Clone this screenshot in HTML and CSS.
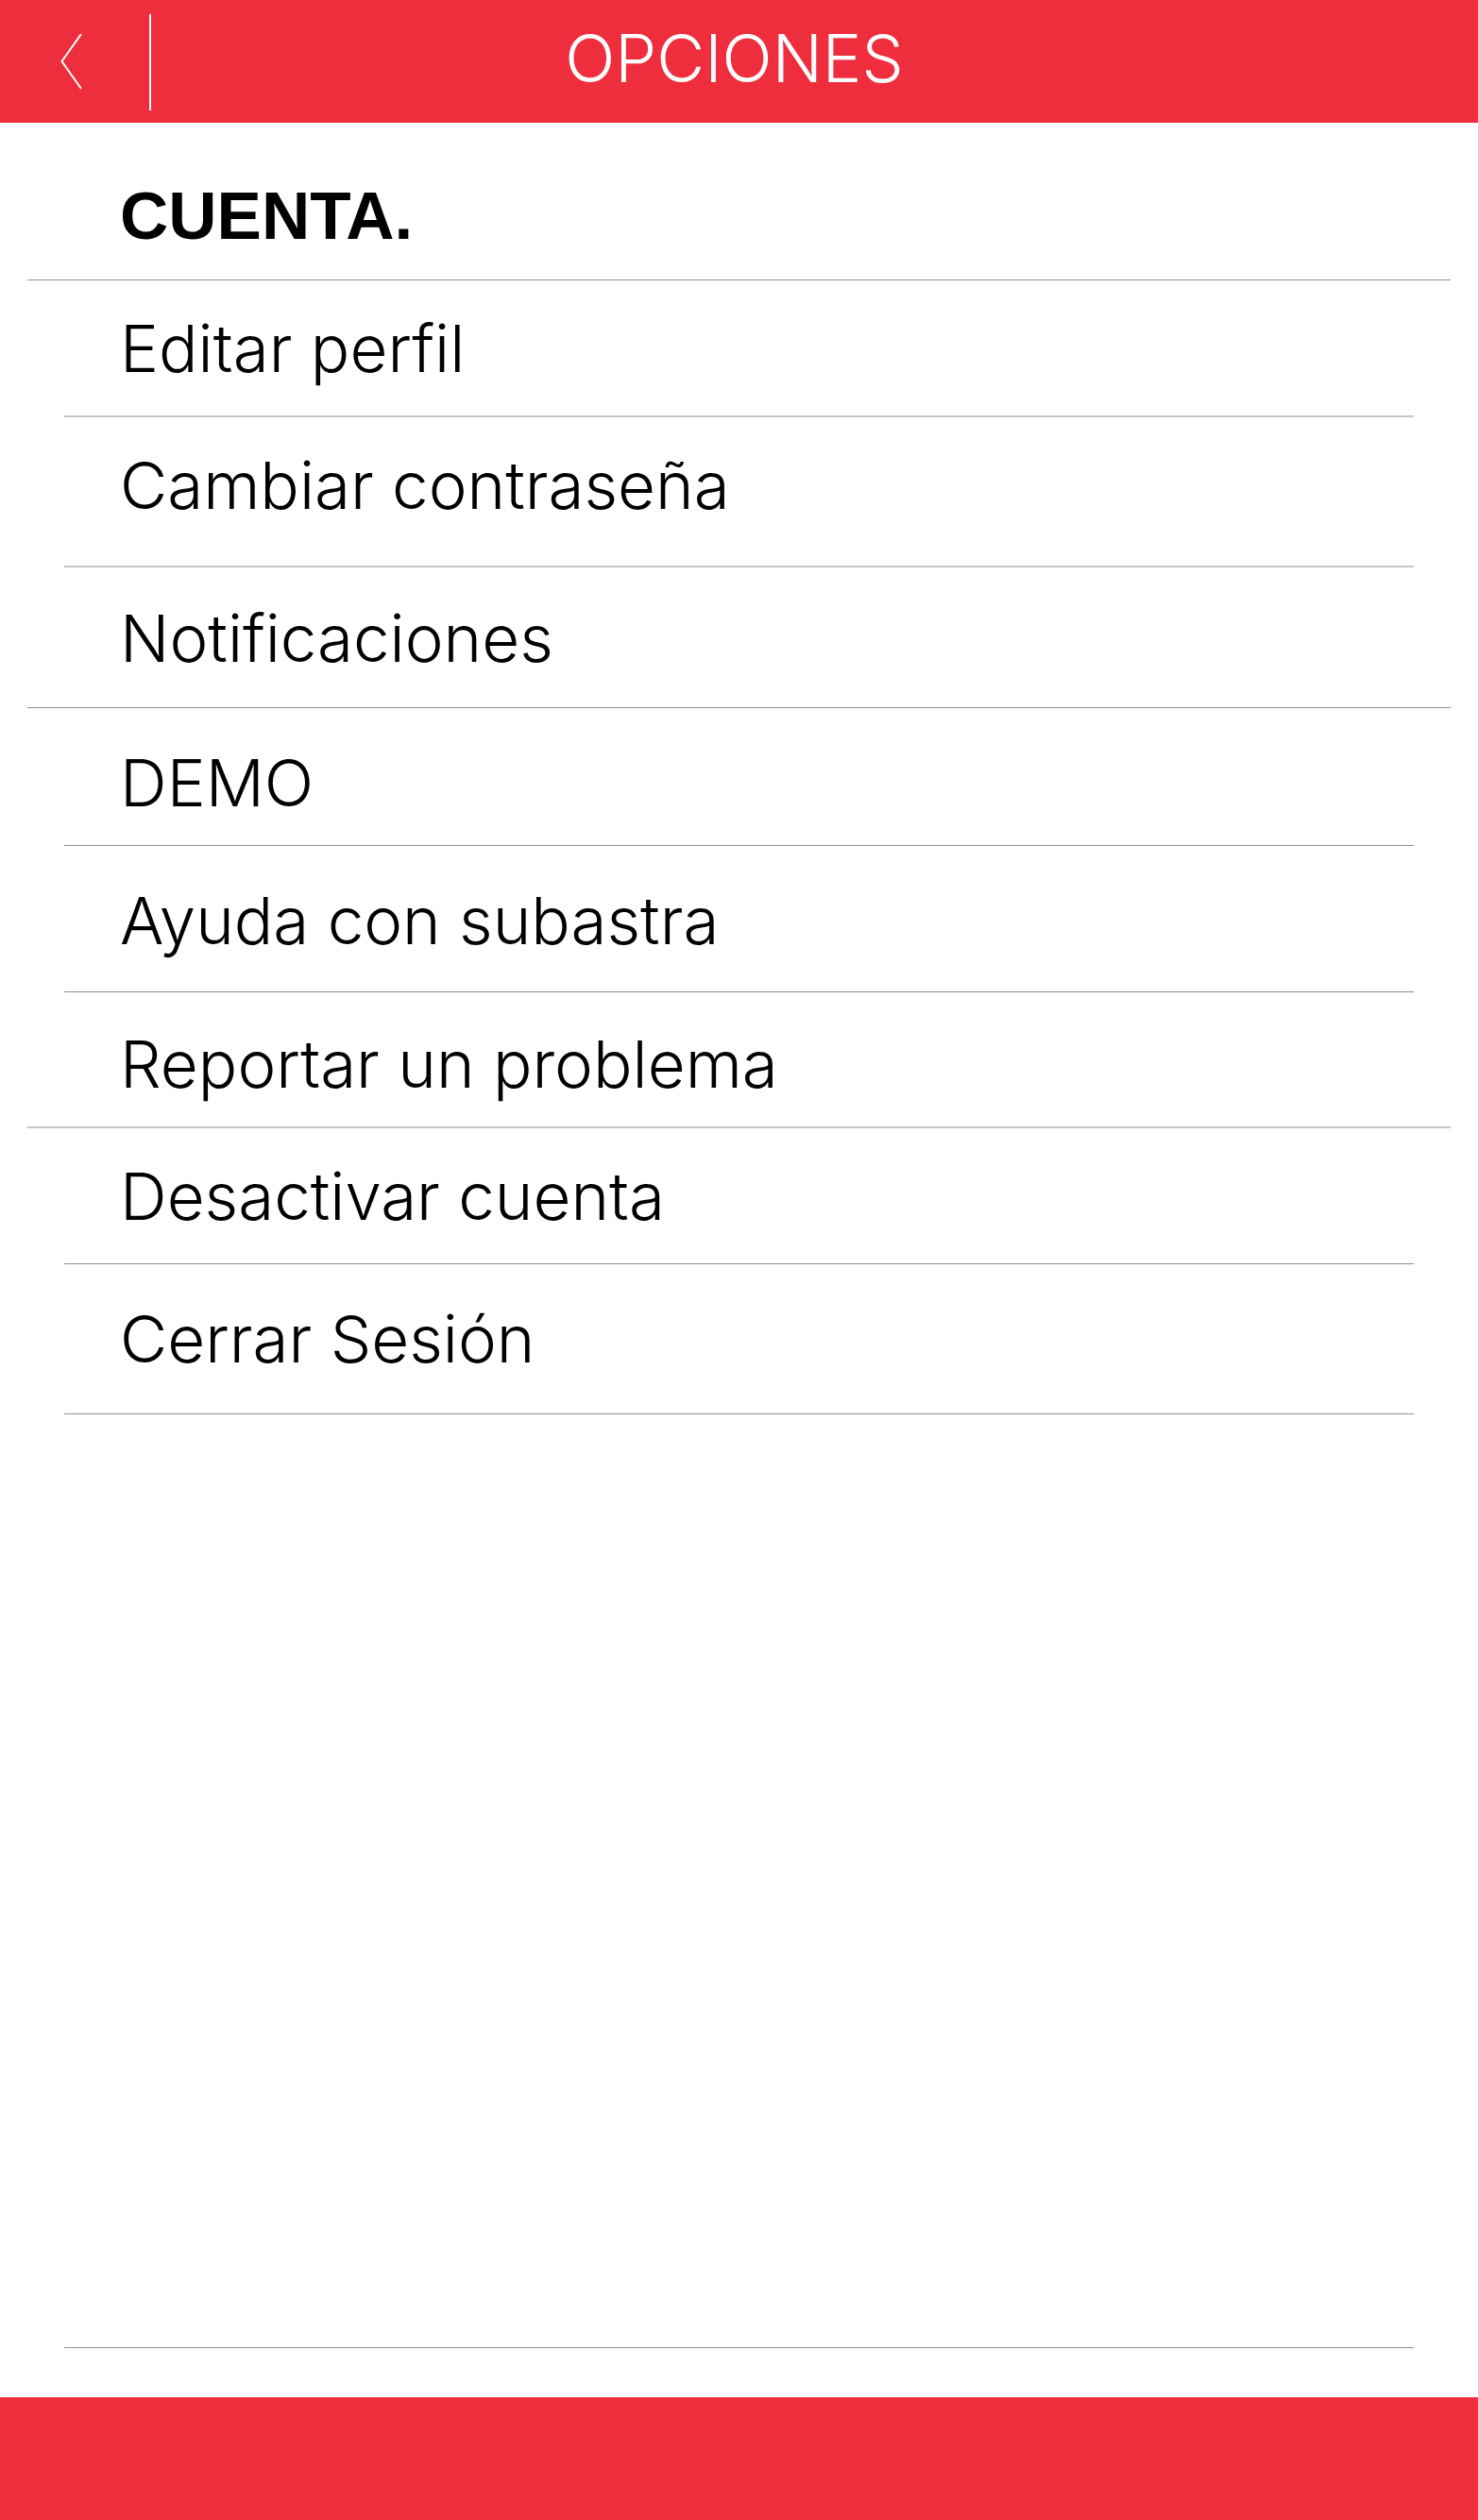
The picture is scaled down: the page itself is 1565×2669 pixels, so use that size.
FILE: index.html
```html
<!DOCTYPE html>
<html lang="es">
<head>
  <meta charset="utf-8">
  <meta name="viewport" content="width=device-width, initial-scale=1">
  <title>Opciones</title>
  <link rel="stylesheet" href="styles.css">
</head>
<body>
  <header class="topbar">
    <button class="back" type="button" aria-label="Volver">
      <svg class="back-icon" viewBox="0 0 24 60" aria-hidden="true">
        <path d="M22 0 1.5 29 22 58" fill="none" stroke="currentColor" stroke-width="2"/>
      </svg>
    </button>
    <h1 class="title">OPCIONES</h1>
  </header>

  <main class="options">
    <h2 class="section-title">CUENTA.</h2>
    <ul class="menu">
      <li class="row thick"><a class="link short" href="#perfil">Editar perfil</a></li>
      <li class="row thick"><a class="link tall" href="#contrasena">Cambiar contraseña</a></li>
      <li class="row wide"><a class="link middle" href="#notificaciones">Notificaciones</a></li>
      <li class="row"><a class="link low" href="#demo">DEMO</a></li>
      <li class="row"><a class="link roomy" href="#ayuda">Ayuda con subastra</a></li>
      <li class="row wide thick"><a class="link compact" href="#reportar">Reportar un problema</a></li>
      <li class="row"><a class="link short" href="#desactivar">Desactivar cuenta</a></li>
      <li class="row"><a class="link tall low" href="#salir">Cerrar Sesión</a></li>
    </ul>
    <hr class="end-rule">
  </main>

  <footer class="bottombar"></footer>
</body>
</html>
```
FILE: styles.css
```css
* {
  box-sizing: border-box;
}

:root {
  --red: #ef2e3d;
  --rule: #8f8f8f;
  --rule-soft: #c6c6c6;
  --gutter: 29px;
  --inset: 68px;
  --text-left: 127px;
}

body {
  margin: 0;
  min-height: 100vh;
  display: flex;
  flex-direction: column;
  background: #fff;
  color: #000;
  font-family: Inter, "Liberation Sans", sans-serif;
  font-weight: 300;
}

.topbar {
  display: grid;
  grid-template-columns: 160px 1fr 160px;
  align-items: center;
  height: 130px;
  padding: 2px 10px 0 0;
  background: var(--red);
  color: #fff;
}

.back {
  display: flex;
  align-items: center;
  height: 102px;
  padding: 0 0 0 64px;
  border: 0;
  border-right: 2px solid #fff;
  background: none;
  color: inherit;
  cursor: pointer;
}

.back-icon {
  width: 24px;
  height: 60px;
}

.title {
  margin: 0;
  padding-bottom: 8px;
  font-size: 70px;
  font-weight: 300;
  line-height: 80px;
  text-align: center;
}

.options {
  flex: 1;
  display: flex;
  flex-direction: column;
}

.section-title {
  margin: 0 var(--gutter);
  padding: 59px 0 27px calc(var(--text-left) - var(--gutter));
  border-bottom: 1px solid var(--rule);
  font-family: "Liberation Sans", Arial, sans-serif;
  font-size: 71px;
  font-weight: 700;
  line-height: 80px;
}

.menu {
  margin: 0;
  padding: 0;
  list-style: none;
}

.row {
  margin: 0 var(--inset);
  padding-left: calc(var(--text-left) - var(--inset));
  border-bottom: 1px solid var(--rule);
}

.row.wide {
  margin: 0 var(--gutter);
  padding-left: calc(var(--text-left) - var(--gutter));
}

.row.thick {
  border-bottom: 2px solid var(--rule-soft);
}

.link {
  display: block;
  color: inherit;
  font-size: 69px;
  line-height: 80px;
  text-decoration: none;
}

.link.short {
  padding: 32px 0 31px;
}

.link.compact {
  padding: 36px 0 26px;
}

.link.middle {
  padding: 35px 0 33px;
}

.link.tall {
  padding: 32px 0 45px;
}

.link.low {
  padding: 39px 0 26px;
}

.link.roomy {
  padding: 39px 0 35px;
}

.link.tall.low {
  padding: 39px 0;
}

.end-rule {
  width: auto;
  margin: auto var(--inset) 52px;
  border: 0;
  border-top: 1px solid var(--rule);
}

.bottombar {
  height: 130px;
  background: var(--red);
}
```
